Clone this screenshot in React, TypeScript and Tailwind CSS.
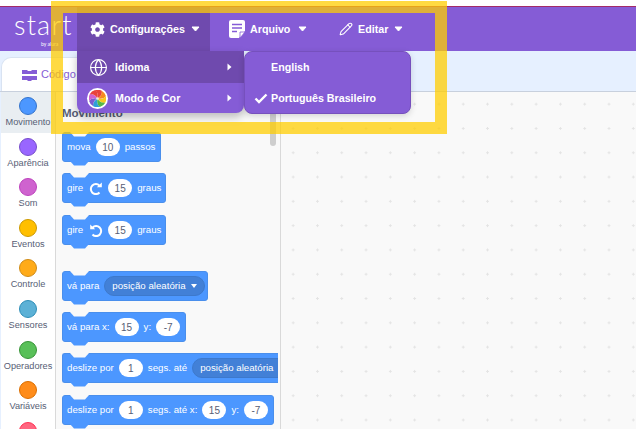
import React from "react";
import { Globe, Pencil } from "lucide-react";
import { FaCog } from "react-icons/fa";

const cats: [string, string, string][] = [
  ["Movimento", "bg-[#4c97ff]", "border-[#3373cc]"],
  ["Aparência", "bg-[#9966ff]", "border-[#774dcb]"],
  ["Som", "bg-[#cf63cf]", "border-[#bd42bd]"],
  ["Eventos", "bg-[#ffbf00]", "border-[#cc9900]"],
  ["Controle", "bg-[#ffab19]", "border-[#cf8b17]"],
  ["Sensores", "bg-[#5cb1d6]", "border-[#2e8eb8]"],
  ["Operadores", "bg-[#59c059]", "border-[#389438]"],
  ["Variáveis", "bg-[#ff8c1a]", "border-[#db6e00]"],
  ["", "bg-[#ff6680]", "border-[#ff3355]"],
];

function Caret() {
  return (
    <svg width="9" height="6" viewBox="0 0 9 6" className="shrink-0">
      <path d="M1 1h7L4.5 5z" fill="#fff" stroke="#fff" strokeLinejoin="round" />
    </svg>
  );
}

function RightArrow() {
  return (
    <svg width="5" height="8" viewBox="0 0 5 8">
      <path d="M0.5 0.5L4.5 4L0.5 7.5z" fill="#fff" />
    </svg>
  );
}

function Pill({ children }: { children: React.ReactNode }) {
  return (
    <span className="flex h-[18px] w-[24px] shrink-0 items-center justify-center rounded-full bg-white text-[10px] text-[#575e75]">
      {children}
    </span>
  );
}

function DropPill({ children }: { children: React.ReactNode }) {
  return (
    <span className="flex h-[20px] shrink-0 items-center gap-[5px] rounded-full border border-[#3d79cc] bg-[#4280d7] px-[7px] text-[9.7px] whitespace-nowrap text-white">
      {children}
      <svg width="6" height="4" viewBox="0 0 6 4" className="shrink-0">
        <path d="M0 0h6L3 4z" fill="#fff" />
      </svg>
    </span>
  );
}

function Block({ children, className }: { children: React.ReactNode; className?: string }) {
  return (
    <div
      className={`relative flex h-[30px] items-center gap-[5px] rounded-[3px] border border-[#4a8fec] bg-[#4c97ff] px-[4px] text-[9.7px] whitespace-nowrap text-white ${className ?? ""}`}
    >
      <svg width="20" height="5" viewBox="0 0 20 5" className="absolute top-[-1px] left-[7px]">
        <path d="M0 0L4 4.5H15L19 0z" fill="#f9f9f9" />
      </svg>
      <svg width="20" height="5" viewBox="0 0 20 5" className="absolute top-full left-[7px]">
        <path d="M0 0L4 4.5H15L19 0z" fill="#4c97ff" />
      </svg>
      {children}
    </div>
  );
}

function Turn({ ccw }: { ccw?: boolean }) {
  return (
    <svg width="14" height="13" viewBox="0 0 14 13" className={ccw ? "ml-[1px] shrink-0 scale-x-[-1]" : "ml-[1px] shrink-0"}>
      <path d="M10.5 3.7A5 5 0 1 0 10.5 10.5" fill="none" stroke="#fff" strokeWidth="2" />
      <path d="M7.8 5.3h5V0.5z" fill="#fff" />
    </svg>
  );
}

function FileIcon() {
  return (
    <svg width="16" height="18" viewBox="0 0 16 18" className="shrink-0">
      <path d="M2 0h12a2 2 0 0 1 2 2v9l-6 7H2a2 2 0 0 1-2-2V2a2 2 0 0 1 2-2z" fill="#fff" />
      <path d="M3 4.5h10M3 8h10M3 11.5h5" stroke="#855cd6" strokeWidth="1.4" />
      <path d="M11 18l5-6h-5z" fill="#fff" stroke="#855cd6" strokeWidth="0.8" />
    </svg>
  );
}

function ColorDisc() {
  const cols = ["#e9423b", "#f58a1f", "#f7c81e", "#55b848", "#2f9fd8", "#7d5bd0", "#cf63cf", "#e9423b"];
  return (
    <span className="flex h-[21px] w-[21px] shrink-0 items-center justify-center rounded-full bg-white">
      <svg width="17" height="17" viewBox="-10 -10 20 20">
        {cols.map((c, i) => (
          <path key={i} transform={`rotate(${i * 45})`} d="M0 0C2 -6 -2 -9 -3 -10A10.4 10.4 0 0 1 5 -9C6 -5 3 -2 0 0z" fill={c} />
        ))}
        <circle r="1.6" fill="#fff" opacity="0.7" />
      </svg>
    </span>
  );
}

export default function App() {
  return (
    <div className="relative flex h-[429px] w-[636px] flex-col overflow-hidden bg-white font-['Liberation_Sans',sans-serif]">
      <div className="h-[6px] shrink-0 bg-white" />
      <div className="h-px shrink-0 bg-[#a32a68]" />
      <header className="flex h-[44px] shrink-0 items-center bg-[#855cd6] text-[10.7px] font-bold text-white">
        <div className="relative ml-[14px] h-[32px] w-[63px] font-['Lato',sans-serif] leading-none">
          <div className="text-[27px] leading-[24px] font-light tracking-[1.2px]">start</div>
          <div className="absolute top-[28px] left-[27px] text-[5px] leading-[6px] font-normal whitespace-nowrap">by alura</div>
        </div>
        <div className="flex h-full w-[133px] items-center bg-[#6f4aae] pl-[13px]">
          <FaCog size={15} className="shrink-0" />
          <span className="ml-[5px] w-[75px] whitespace-nowrap">Configurações</span>
          <span className="ml-[6px]">
            <Caret />
          </span>
        </div>
        <div className="ml-[19px] flex items-center">
          <FileIcon />
          <span className="ml-[5px] w-[42px]">Arquivo</span>
          <span className="ml-[6px]">
            <Caret />
          </span>
        </div>
        <div className="ml-[32px] flex items-center">
          <Pencil size={14} strokeWidth={1.8} className="shrink-0" />
          <span className="ml-[5px] w-[30px]">Editar</span>
          <span className="ml-[6px]">
            <Caret />
          </span>
        </div>
      </header>

      <main className="flex min-h-0 flex-1 flex-col bg-[#e6f0ff]">
        <div className="flex h-[40px] shrink-0 items-end pl-[1px]">
          <div className="flex h-[34px] w-[100px] items-center gap-[4px] rounded-t-[10px] border border-b-0 border-[#d9e3f2] bg-white pl-[20px] text-[11px] text-[#855cd6]">
            <svg width="15" height="12" viewBox="0 0 15 12">
              <path d="M0 1h5l1 1h3l1-1h5v4H0zM0 7h15v4H10l-1 1H6l-1-1H0z" fill="#855cd6" />
            </svg>
            Código
          </div>
        </div>
        <div className="flex min-h-0 flex-1 border-t border-[#c8d0dd]">
          <div className="ml-[1px] w-[55px] shrink-0 border-r border-[#d9d9d9] bg-white">
            {cats.map(([name, bg, bd], i) => (
              <div
                key={bg}
                className={`flex h-[40.6px] flex-col items-center pt-[5px] text-[9.2px] leading-[12px] whitespace-nowrap text-[#575e75] ${i === 0 ? "bg-[#e9eef2]" : ""}`}
              >
                <span className={`h-[18px] w-[18px] shrink-0 rounded-full border ${bg} ${bd}`} />
                {name && <span className="mt-[1px]">{name}</span>}
              </div>
            ))}
          </div>
          <div className="relative w-[225px] shrink-0 border-r border-[#d9d9d9] bg-[#f9f9f9]">
            <div className="h-full w-[222px] overflow-hidden pl-[6px]">
              <div className="pt-[15px] text-[11.5px] leading-[13px] font-bold text-[#575e75]">Movimento</div>
              <Block className="mt-[12px] w-[99px]">
                mova <Pill>10</Pill> passos
              </Block>
              <Block className="mt-[11px] w-[104px]">
                gire <Turn /> <Pill>15</Pill> graus
              </Block>
              <Block className="mt-[12px] w-[104px]">
                gire <Turn ccw /> <Pill>15</Pill> graus
              </Block>
              <Block className="mt-[26px] w-[146px]">
                vá para <DropPill>posição aleatória</DropPill>
              </Block>
              <Block className="mt-[11px] w-[124px]">
                vá para x: <Pill>15</Pill> y: <Pill>-7</Pill>
              </Block>
              <Block className="mt-[11px] w-[216px] rounded-r-none border-r-0">
                deslize por <Pill>1</Pill> segs. até <DropPill>posição aleatória</DropPill>
              </Block>
              <Block className="mt-[12px] w-[212px]">
                deslize por <Pill>1</Pill> segs. até x: <Pill>15</Pill> y: <Pill>-7</Pill>
              </Block>
            </div>
            <div className="absolute top-[20px] left-[214px] h-[34px] w-[6px] rounded-full bg-[#cecece]" />
          </div>
          <div className="min-w-0 flex-1 bg-[#f9f9f9] bg-[radial-gradient(#e4e4e4_1px,transparent_1.2px)] bg-[size:24.3px_24.3px]" />
        </div>
      </main>

      {/* Open menu */}
      <div className="absolute top-[51px] left-[77px] w-[167px] overflow-hidden rounded-b-[8px] bg-[#855cd6] text-[10.7px] font-bold text-white shadow-[0_4px_8px_rgba(0,0,0,0.25)]">
        <div className="flex h-[32px] items-center bg-[#6f4aae] pr-[12px] pl-[12px]">
          <Globe size={19} strokeWidth={1.5} className="shrink-0" />
          <span className="ml-[7px] flex-1">Idioma</span>
          <RightArrow />
        </div>
        <div className="flex h-[30px] items-center pr-[12px] pl-[10px]">
          <ColorDisc />
          <span className="ml-[7px] flex-1">Modo de Cor</span>
          <RightArrow />
        </div>
      </div>
      <div className="absolute top-[51px] left-[244px] w-[167px] rounded-[8px] border border-[#7650bd] bg-[#855cd6] text-[10.7px] font-bold text-white shadow-[0_2px_6px_rgba(0,0,0,0.15)]">
        <div className="flex h-[31px] items-center pl-[26px]">English</div>
        <div className="flex h-[30px] items-center">
          <svg width="14" height="11" viewBox="0 0 14 11" className="ml-[9px] shrink-0">
            <path d="M1.5 5.5L5 9L12.5 1.5" fill="none" stroke="#fff" strokeWidth="2.4" />
          </svg>
          <span className="ml-[3px] whitespace-nowrap">Português Brasileiro</span>
        </div>
      </div>

      {/* Highlight frame */}
      <div className="absolute top-px left-[51px] h-[133px] w-[396px] border-[12px] border-[rgba(255,205,0,0.74)]" />
    </div>
  );
}
